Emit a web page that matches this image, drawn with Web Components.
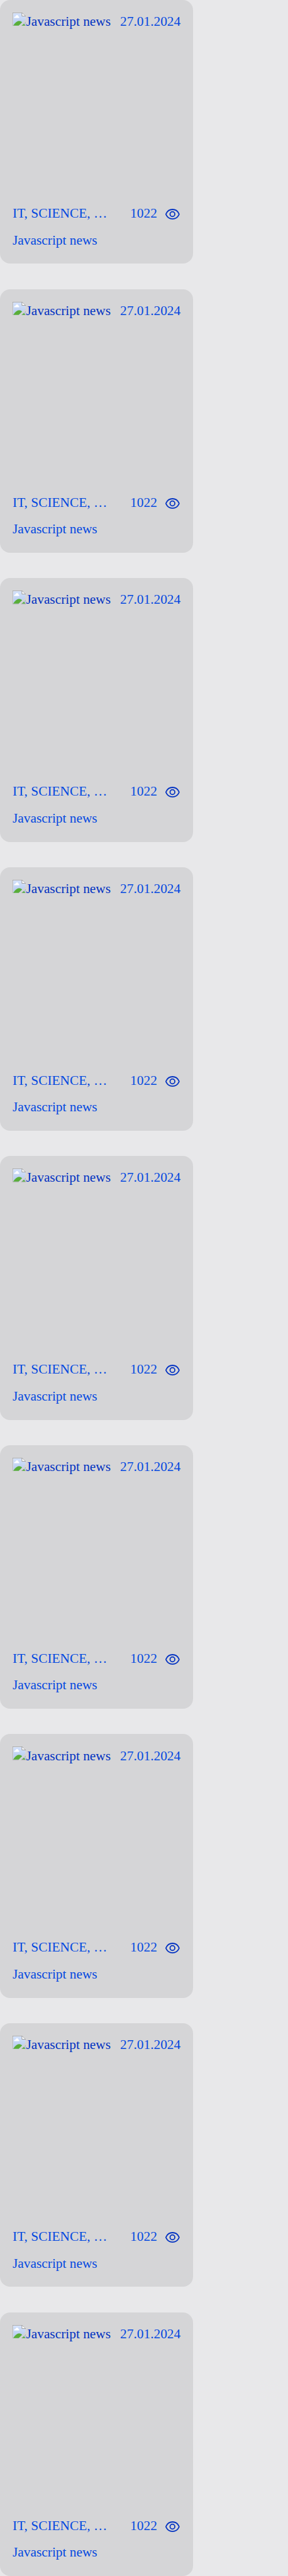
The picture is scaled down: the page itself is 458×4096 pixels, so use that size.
<!DOCTYPE html>
<html lang="en">
<head>
<meta charset="utf-8">
<title>Articles</title>
<style>
html, body { margin: 0; background: #e8e8ea; }
body { --u: calc(4096px / 6132); font-family: "Liberation Serif", "Times New Roman", serif; }
</style>
</head>
<body>
<article-list></article-list>
<script>
class ImagePlaceholder extends HTMLElement {
  constructor() {
    super();
    this.attachShadow({ mode: 'open' }).innerHTML = `
      <style>
        :host { display: flex; align-items: flex-start; color: #0232c2; }
        svg { display: block; flex: none; width: calc(32 * var(--u)); height: calc(32 * var(--u)); }
        span { padding-top: calc(3.2 * var(--u)); white-space: nowrap; }
      </style>
      <svg viewBox="0 0 32 32">
        <defs><linearGradient id="sky" x1="0" y1="0" x2="0" y2="1"><stop offset="0" stop-color="#d3e1fb"/><stop offset="1" stop-color="#b4c9ee"/></linearGradient></defs>
        <path d="M0 0H22.5L32 9V16L14 32H0Z" fill="#999"/>
        <path d="M1 1H22V9H31V16.8L15 31H1Z" fill="#f1f5fd"/>
        <path d="M2 2H21.5V9.500H30V17.600L15 31H2Z" fill="url(#sky)"/>
        <path d="M22.800 1.400V8H30Z" fill="#fff"/>
        <path d="M22 .5V8.500H31.500" fill="none" stroke="#999"/>
        <path d="M3.500 12.800C3.300 10.500 5.200 9 7 9.400C7.700 5 13.700 4.800 14 9.200C15.600 9.500 16.400 11.200 15.800 12.800Z" fill="#fff"/>
        <path d="M1.500 31C6 23.500 11 19.700 15.300 19.700C18.200 19.700 20.500 21 22.700 23.200L14.500 31Z" fill="#5aae38"/>
        <path d="M32 21.500V32H20Z" fill="#999"/>
        <path d="M31 23V31H21.500Z" fill="#bccff0"/>
        <path d="M22 31L27.300 26.500L30.500 31Z" fill="#5aae38"/>
      </svg>
      <span><slot></slot></span>`;
  }
}
customElements.define('image-placeholder', ImagePlaceholder);

class ViewCount extends HTMLElement {
  constructor() {
    super();
    this.attachShadow({ mode: 'open' }).innerHTML = `
      <style>
        :host { display: flex; gap: calc(16 * var(--u)); }
        svg { display: block; width: calc(40 * var(--u)); height: calc(40 * var(--u)); }
      </style>
      <slot></slot>
      <svg viewBox="0 0 40 40" fill="none" stroke="#0232c2" stroke-width="2.7">
        <path d="M4.700 19.200C8 12.300 13.800 9 20 9S32 12.300 35.300 19.200Q35.900 20.400 35.300 21.600C32 28.500 26.200 31.700 20 31.700S8 28.500 4.700 21.600Q4.100 20.400 4.700 19.200Z"/>
        <circle cx="19.800" cy="20.200" r="5.700"/>
      </svg>`;
  }
}
customElements.define('view-count', ViewCount);

class ArticleCard extends HTMLElement {
  constructor() {
    super();
    this.attachShadow({ mode: 'open' }).innerHTML = `
      <style>
        :host {
          display: flex; flex-direction: column; box-sizing: border-box;
          width: calc(460 * var(--u)); height: calc(628 * var(--u));
          padding: calc(30 * var(--u)); border-radius: calc(24 * var(--u));
          background: #d5d5d7; color: #0449e0;
          font-size: calc(32 * var(--u)); line-height: calc(36 * var(--u)); white-space: nowrap;
        }
        .row { display: flex; justify-content: space-between; align-items: flex-start; }
        .cover { height: calc(459.6 * var(--u)); }
        .date { padding-top: calc(3.2 * var(--u)); }
        .info { height: calc(63.7 * var(--u)); }
      </style>
      <div class="row cover">
        <image-placeholder><slot name="alt"></slot></image-placeholder>
        <span class="date"><slot name="date"></slot></span>
      </div>
      <div class="row info">
        <span><slot name="types"></slot></span>
        <view-count><slot name="views"></slot></view-count>
      </div>
      <div><slot name="title"></slot></div>`;
  }
}
customElements.define('article-card', ArticleCard);

class ArticleList extends HTMLElement {
  constructor() {
    super();
    const card = `<article-card>
      <span slot="alt">Javascript news</span>
      <span slot="date">27.01.2024</span>
      <span slot="types">IT, SCIENCE, …</span>
      <span slot="views">1022</span>
      <span slot="title">Javascript news</span>
    </article-card>`;
    this.attachShadow({ mode: 'open' }).innerHTML = `
      <style>:host { display: flex; flex-direction: column; gap: calc(60 * var(--u)); }</style>
      ${card.repeat(9)}`;
  }
}
customElements.define('article-list', ArticleList);
</script>
</body>
</html>
